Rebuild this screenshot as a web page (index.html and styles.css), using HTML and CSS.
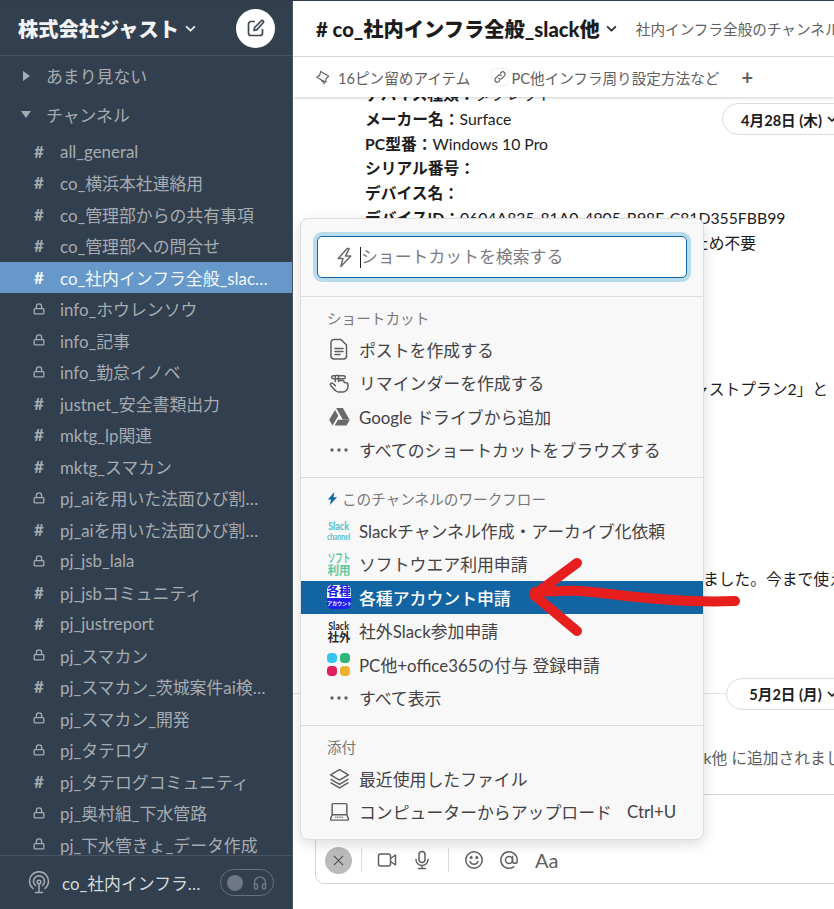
FILE: index.html
```html
<!DOCTYPE html>
<html lang="ja">
<head>
    <meta charset="utf-8" />
    <title>co_社内インフラ全般_slack他</title>
    <link rel="stylesheet" href="styles.css">
</head>
<body>
    <svg class="defs" width="0" height="0">
        <symbol id="lock" viewBox="0 0 16 16"><path d="M3.500 7.500h9a1 1 0 0 1 1 1v4a1 1 0 0 1-1 1h-9a1 1 0 0 1-1-1v-4a1 1 0 0 1 1-1zM5 7.500V5.200a3 3 0 0 1 6 0v2.300" fill="none" stroke="currentColor" stroke-width="1.500"/></symbol>
        <symbol id="chev" viewBox="0 0 10 10"><path d="M1.500 3.500 5 7l3.500-3.500" fill="none" stroke="currentColor" stroke-width="1.700" stroke-linecap="round" stroke-linejoin="round"/></symbol>
        <symbol id="dots" viewBox="0 0 20 6"><circle cx="3" cy="3" r="1.700"/><circle cx="10" cy="3" r="1.700"/><circle cx="17" cy="3" r="1.700"/></symbol>
    </svg>

    <div class="app">
        <aside class="side">
            <div class="side_head">
                <span class="team">株式会社ジャスト</span>
                <svg class="team_chev"><use href="#chev"/></svg>
                <span class="compose">
                    <svg viewBox="0 0 20 20" width="20" height="20"><path d="M9 3.500H5a2.500 2.500 0 0 0-2.500 2.500v9A2.500 2.500 0 0 0 5 17.500h9a2.500 2.500 0 0 0 2.500-2.500v-4M8 12.500l.6-3L15.300 2.800a1.300 1.300 0 0 1 1.900 0 1.300 1.300 0 0 1 0 1.900L10.600 11.900z" fill="none" stroke="#3f4a56" stroke-width="1.700" stroke-linejoin="round"/></svg>
                </span>
            </div>
            <div class="side_list">
                <div class="section section_first"><i class="tri_right"></i>あまり見ない</div>
                <div class="section section_open"><i class="tri_down"></i>チャンネル</div>
                <div class="channel"><span class="hash">#</span><span class="chan_name">all_general</span></div>
                <div class="channel"><span class="hash">#</span><span class="chan_name">co_横浜本社連絡用</span></div>
                <div class="channel"><span class="hash">#</span><span class="chan_name">co_管理部からの共有事項</span></div>
                <div class="channel"><span class="hash">#</span><span class="chan_name">co_管理部への問合せ</span></div>
                <div class="channel selected"><span class="hash">#</span><span class="chan_name">co_社内インフラ全般_slack他</span></div>
                <div class="channel"><svg class="lock"><use href="#lock"/></svg><span class="chan_name">info_ホウレンソウ</span></div>
                <div class="channel"><svg class="lock"><use href="#lock"/></svg><span class="chan_name">info_記事</span></div>
                <div class="channel"><svg class="lock"><use href="#lock"/></svg><span class="chan_name">info_勤怠イノベ</span></div>
                <div class="channel"><span class="hash">#</span><span class="chan_name">justnet_安全書類出力</span></div>
                <div class="channel"><span class="hash">#</span><span class="chan_name">mktg_lp関連</span></div>
                <div class="channel"><span class="hash">#</span><span class="chan_name">mktg_スマカン</span></div>
                <div class="channel"><svg class="lock"><use href="#lock"/></svg><span class="chan_name">pj_aiを用いた法面ひび割れ検出</span></div>
                <div class="channel"><span class="hash">#</span><span class="chan_name">pj_aiを用いた法面ひび割れ検出</span></div>
                <div class="channel"><svg class="lock"><use href="#lock"/></svg><span class="chan_name">pj_jsb_lala</span></div>
                <div class="channel"><span class="hash">#</span><span class="chan_name">pj_jsbコミュニティ</span></div>
                <div class="channel"><span class="hash">#</span><span class="chan_name">pj_justreport</span></div>
                <div class="channel"><svg class="lock"><use href="#lock"/></svg><span class="chan_name">pj_スマカン</span></div>
                <div class="channel"><span class="hash">#</span><span class="chan_name">pj_スマカン_茨城案件ai検出用</span></div>
                <div class="channel"><svg class="lock"><use href="#lock"/></svg><span class="chan_name">pj_スマカン_開発</span></div>
                <div class="channel"><svg class="lock"><use href="#lock"/></svg><span class="chan_name">pj_タテログ</span></div>
                <div class="channel"><span class="hash">#</span><span class="chan_name">pj_タテログコミュニティ</span></div>
                <div class="channel"><svg class="lock"><use href="#lock"/></svg><span class="chan_name">pj_奥村組_下水管路</span></div>
                <div class="channel"><svg class="lock"><use href="#lock"/></svg><span class="chan_name">pj_下水管きょ_データ作成</span></div>
            </div>
            <div class="side_foot">
                <svg class="huddle" viewBox="0 0 24 24" width="24" height="24" fill="none" stroke="currentColor" stroke-width="1.500" stroke-linecap="round"><path d="M6 17.500a9.500 9.500 0 1 1 12 0M8.500 14.500a5.500 5.500 0 1 1 7 0"/><circle cx="12" cy="11" r="1.800"/><path d="M12 13v8M8.500 21.500h7"/></svg>
                <span class="foot_name">co_社内インフラ全般_slack他</span>
                <span class="toggle">
                    <i class="knob"></i>
                    <svg viewBox="0 0 16 16" width="16" height="16" fill="none" stroke="#6e7783" stroke-width="1.500"><path d="M2.500 10V7.500a5.500 5.500 0 0 1 11 0V10"/><rect x="2.500" y="9" width="3" height="5" rx="1.200"/><rect x="10.500" y="9" width="3" height="5" rx="1.200"/></svg>
                </span>
            </div>
        </aside>

        <main class="main">
            <div class="head">
                <span class="title"># co_社内インフラ全般_slack他</span>
                <svg class="title_chev"><use href="#chev"/></svg>
                <span class="topic">社内インフラ全般のチャンネルです</span>
            </div>
            <div class="tabs">
                <svg class="tab_ico" viewBox="0 0 16 16" width="15" height="15" fill="none" stroke="currentColor" stroke-width="1.300" stroke-linejoin="round" stroke-linecap="round"><path d="M6.200 1.500 4.800 6 1.800 7.800 11.500 13l.2-3.500 2.800-2.800zM6.500 10.500 10 14.500"/></svg>
                <span class="tab_text">16ピン留めアイテム</span>
                <span class="tab_link">
                    <svg viewBox="0 0 16 16" width="14" height="14" fill="none" stroke="currentColor" stroke-width="1.400" stroke-linecap="round"><path d="M6.500 9.500a2.700 2.700 0 0 0 3.800 0l3-3a2.700 2.700 0 0 0-3.800-3.800L8.500 3.700M9.500 6.500a2.700 2.700 0 0 0-3.800 0l-3 3a2.700 2.700 0 0 0 3.800 3.800l1-1"/></svg>
                </span>
                <span class="tab_text">PC他インフラ周り設定方法など</span>
                <span class="tab_plus">+</span>
            </div>
            <div class="messages">
                <div class="date_sticky">4月28日 (木)<svg class="date_chev"><use href="#chev"/></svg></div>
                <div class="scroll">
                    <div class="line"><b>デバイス種類：</b>タブレット</div>
                    <div class="line"><b>メーカー名：</b>Surface</div>
                    <div class="line"><b>PC型番：</b>Windows 10 Pro</div>
                    <div class="line"><b>シリアル番号：</b></div>
                    <div class="line"><b>デバイス名：</b></div>
                    <div class="line"><b>デバイスID：</b>0604A835-81A0-4905-B98F-C81D355FBB99</div>
                    <div class="line tail_a">ため不要</div>
                    <div class="gap_a"></div>
                    <div class="line tail_b">ジャストプラン2」と</div>
                    <div class="gap_b"></div>
                    <div class="line tail_c">ました。今まで使えていた</div>
                    <div class="gap_c"></div>
                    <div class="divider"><span class="date_pill">5月2日 (月)<svg class="date_chev"><use href="#chev"/></svg></span></div>
                    <div class="gap_d"></div>
                    <div class="line tail_d">ck他 に追加されました</div>
                </div>
            </div>
            <div class="composer">
                <span class="close_btn">
                    <svg viewBox="0 0 12 12" width="11" height="11" fill="none" stroke="#4a4a4a" stroke-width="1.100"><path d="M1 1l10 10M11 1 1 11"/></svg>
                </span>
                <i class="sep"></i>
                <svg class="tool tool_video" viewBox="0 0 20 20" width="20" height="20" fill="none" stroke="currentColor" stroke-width="1.500" stroke-linejoin="round"><rect x="1.500" y="4" width="12" height="12" rx="2"/><path d="M13.500 8.500 18.500 5v10l-5-3.500"/></svg>
                <svg class="tool tool_mic" viewBox="0 0 20 20" width="20" height="20" fill="none" stroke="currentColor" stroke-width="1.500" stroke-linecap="round"><rect x="7" y="1.500" width="6" height="11" rx="3"/><path d="M4 9.500a6 6 0 0 0 12 0M10 15.500v3M6.500 18.500h7"/></svg>
                <i class="sep sep_b"></i>
                <svg class="tool tool_smile" viewBox="0 0 20 20" width="20" height="20" fill="none" stroke="currentColor" stroke-width="1.500" stroke-linecap="round"><circle cx="10" cy="10" r="8.200"/><path d="M6 11.500a4.300 4.300 0 0 0 8 0"/><circle cx="7.200" cy="7.500" r=".8" fill="currentColor"/><circle cx="12.800" cy="7.500" r=".8" fill="currentColor"/></svg>
                <svg class="tool tool_at" viewBox="0 0 20 20" width="20" height="20" fill="none" stroke="currentColor" stroke-width="1.500" stroke-linecap="round"><circle cx="10" cy="10" r="3.500"/><path d="M13.500 6.500V11a2.300 2.300 0 0 0 4.700 0v-1a8.200 8.200 0 1 0-3.500 6.800"/></svg>
                <span class="tool_aa">Aa</span>
            </div>
        </main>

        <div class="popup">
            <div class="search_wrap">
                <div class="search">
                    <svg class="search_bolt" viewBox="0 0 20 20" width="21" height="21" fill="none" stroke="#6b6b6b" stroke-width="1.400" stroke-linejoin="round"><path d="M12.500 1.500 4 11h4.500l-2 7.500L16 8.500h-5l3.500-7z"/></svg>
                    <i class="caret"></i>
                    <span class="search_text">ショートカットを検索する</span>
                </div>
            </div>

            <div class="pop_section">
                <div class="pop_label">ショートカット</div>
                <div class="pop_item">
                    <span class="pop_ico"><svg viewBox="0 0 20 22" width="20" height="22" fill="none" stroke="currentColor" stroke-width="1.500" stroke-linejoin="round" stroke-linecap="round"><path d="M5 1.500h7l5.500 5.500v11a3 3 0 0 1-3 3H5a3 3 0 0 1-3-3v-13.500a3 3 0 0 1 3-3z"/><path d="M6 10.500h8M6 13.500h8M6 16.500h5"/></svg></span>
                    ポストを作成する
                </div>
                <div class="pop_item">
                    <span class="pop_ico"><svg viewBox="0 0 20 20" width="21" height="21" fill="none" stroke="currentColor" stroke-width="1.400" stroke-linecap="round" stroke-linejoin="round"><path d="M6 9V4.500a1.500 1.500 0 0 1 3 0V9M9 3.500h5a1.500 1.500 0 0 1 0 3H4a1.500 1.500 0 0 1 0-3h2"/><path d="M9 8h4a1.500 1.500 0 0 1 1.500 1.500V10l2 .3a1.500 1.500 0 0 1 1.500 1.500V14a5 5 0 0 1-5 5H9a4 4 0 0 1-3-1.500L1.800 13a1.400 1.400 0 0 1 2-2L6 13"/></svg></span>
                    リマインダーを作成する
                </div>
                <div class="pop_item">
                    <span class="pop_ico"><svg viewBox="0 0 20 18" width="21" height="19" fill="#6a6a6a"><path d="M6.800 1h6.400l6.300 10.800h-6.400zM5.700 2.800l3.200 5.600L3.300 17.500 .2 12.200zM5.300 17.500l3.200-5.500H19.800l-3.200 5.500z"/></svg></span>
                    Google ドライブから追加
                </div>
                <div class="pop_item">
                    <span class="pop_ico"><svg class="dots"><use href="#dots"/></svg></span>
                    すべてのショートカットをブラウズする
                </div>
            </div>

            <div class="pop_section">
                <div class="pop_label">
                    <svg class="label_bolt" viewBox="0 0 12 14" width="11" height="13" fill="#1264a3"><path d="M8 0 1 8h3.500L3 14l8-8.500H7z"/></svg>
                    このチャンネルのワークフロー
                </div>
                <div class="pop_item">
                    <span class="tile tile_teal"><span class="tile_wide">Slack</span><span class="tile_thin">channel</span></span>
                    Slackチャンネル作成・アーカイブ化依頼
                </div>
                <div class="pop_item">
                    <span class="tile tile_green"><span class="tile_kana">ソフト</span><span class="tile_kanji">利用</span></span>
                    ソフトウエア利用申請
                </div>
                <div class="pop_item active">
                    <span class="tile tile_blue"><span class="tile_top">各種</span><span class="tile_bottom">アカウント</span></span>
                    各種アカウント申請
                </div>
                <div class="pop_item">
                    <span class="tile tile_black"><span class="tile_wide">Slack</span><span class="tile_kanji">社外</span></span>
                    社外Slack参加申請
                </div>
                <div class="pop_item">
                    <span class="tile_squares"><i class="sq_sky"></i><i class="sq_green"></i><i class="sq_red"></i><i class="sq_yellow"></i></span>
                    PC他+office365の付与 登録申請
                </div>
                <div class="pop_item">
                    <span class="pop_ico"><svg class="dots"><use href="#dots"/></svg></span>
                    すべて表示
                </div>
            </div>

            <div class="pop_section pop_section_last">
                <div class="pop_label">添付</div>
                <div class="pop_item">
                    <span class="pop_ico"><svg viewBox="0 0 20 20" width="21" height="21" fill="none" stroke="currentColor" stroke-width="1.400" stroke-linejoin="round"><path d="M10 1.500 18.500 6.500 10 11.500 1.500 6.500zM1.500 10.500 10 15.500l8.500-5M1.500 14 10 19l8.500-5"/></svg></span>
                    最近使用したファイル
                </div>
                <div class="pop_item">
                    <span class="pop_ico"><svg viewBox="0 0 20 20" width="21" height="21" fill="none" stroke="currentColor" stroke-width="1.400" stroke-linejoin="round"><path d="M4 2.500h12a1 1 0 0 1 1 1V13H3V3.500a1 1 0 0 1 1-1zM3 13l-1.500 4a1 1 0 0 0 1 1.200h15a1 1 0 0 0 1-1.200L17 13"/><path d="M6 15.500h8" stroke-dasharray="1 1"/></svg></span>
                    コンピューターからアップロード<span class="shortcut">Ctrl+U</span>
                </div>
            </div>
        </div>

        <svg class="arrow" viewBox="0 0 834 909" width="834" height="909" fill="none" stroke="#e61e1e" stroke-width="10" stroke-linecap="round" stroke-linejoin="round">
            <path d="M735 601C690 603 650 599 610 594S560 591 535 592"/>
            <path d="M577 563 534 595 577 631"/>
        </svg>
    </div>
</body>
</html>
```
FILE: styles.css
```css
* {
    box-sizing: border-box;
}

body {
    margin: 0;
    font-family: Lato, "Noto Sans CJK JP", sans-serif;
    font-size: 16.875px;
    color: #1d1c1d;
    background-color: white;
}

.defs {
    position: absolute;
}

.app {
    position: relative;
    display: flex;
    width: 834px;
    height: 909px;
    overflow: hidden;
    border-top: 1px solid #2f3c4b;
}

/* sidebar */
.side {
    display: flex;
    flex-direction: column;
    flex: 0 0 293px;
    min-width: 0;
    background-color: #323f4e;
    border-right: 1px solid #4a5665;
    color: #a6abb1;
}

.side_head {
    display: flex;
    align-items: center;
    flex: 0 0 55px;
    padding: 0 18px;
    border-bottom: 1px solid #495564;
}

.team {
    font-size: 20.25px;
    font-weight: 900;
    color: #f2f3f4;
}

.team_chev {
    width: 11px;
    height: 11px;
    margin-left: 6px;
    color: #e6e8ea;
}

.compose {
    display: flex;
    align-items: center;
    justify-content: center;
    width: 39px;
    height: 39px;
    margin-left: auto;
    margin-right: -1px;
    border-radius: 50%;
    background-color: white;
}

.side_list {
    flex: 1;
    min-height: 0;
    overflow: hidden;
}

.section {
    display: flex;
    align-items: center;
    height: 31.5px;
    padding-left: 46px;
    position: relative;
}

.section_first {
    margin-top: 4px;
}

.section_open {
    margin-top: 7.5px;
    margin-bottom: 5px;
}

.tri_right {
    position: absolute;
    left: 23px;
    border-left: 7px solid #a6abb1;
    border-top: 5px solid transparent;
    border-bottom: 5px solid transparent;
}

.tri_down {
    position: absolute;
    left: 21px;
    border-top: 7px solid #a6abb1;
    border-left: 5px solid transparent;
    border-right: 5px solid transparent;
}

.channel {
    display: flex;
    align-items: center;
    height: 31.5px;
    padding-left: 33px;
    padding-right: 24px;
}

.channel.selected {
    background-color: #6699c9;
    color: #f4f7fa;
}

.hash {
    flex: 0 0 27px;
    font-weight: 700;
    font-size: 17px;
    padding-left: 1px;
}

.lock {
    flex: 0 0 14px;
    width: 14px;
    height: 14px;
    margin-left: -1px;
    margin-right: 14px;
}

.chan_name {
    flex: 1;
    min-width: 0;
    overflow: hidden;
    white-space: nowrap;
    text-overflow: ellipsis;
}

.side_foot {
    display: flex;
    align-items: center;
    flex: 0 0 54px;
    padding-left: 27px;
    border-top: 1px solid #495564;
}

.huddle {
    flex: none;
    color: #a6abb1;
}

.foot_name {
    width: 141px;
    margin-left: 11px;
    overflow: hidden;
    white-space: nowrap;
    text-overflow: ellipsis;
    color: #d5dade;
}

.toggle {
    display: flex;
    align-items: center;
    gap: 9px;
    width: 54px;
    height: 27px;
    margin-left: 17px;
    padding-left: 6px;
    border: 1px solid #667180;
    border-radius: 14px;
}

.knob {
    width: 16px;
    height: 16px;
    border-radius: 50%;
    background-color: #6e7783;
}

/* main column */
.main {
    display: flex;
    flex-direction: column;
    flex: 1;
    min-width: 0;
    overflow: hidden;
}

.head {
    display: flex;
    align-items: center;
    flex: 0 0 56px;
    padding-left: 23px;
    border-bottom: 1px solid #dedede;
    white-space: nowrap;
}

.title {
    font-size: 20.25px;
    font-weight: 900;
}

.title_chev {
    flex: none;
    width: 11px;
    height: 11px;
    margin-left: 6px;
    color: #333;
}

.topic {
    margin-left: 19px;
    font-size: 14.625px;
    color: #616061;
}

.tabs {
    display: flex;
    align-items: center;
    flex: 0 0 40px;
    padding-left: 22px;
    position: relative;
    z-index: 1;
    font-size: 14.625px;
    color: #616061;
    box-shadow: 0 1px 3px rgba(0, 0, 0, 0.2);
    white-space: nowrap;
}

.tab_ico {
    margin-right: 8px;
}

.tab_link {
    display: flex;
    align-items: center;
    justify-content: center;
    width: 18px;
    height: 18px;
    margin-left: 21px;
    margin-right: 2px;
    border: 1px solid #f0f0f0;
    border-radius: 4px;
}

.tab_plus {
    margin-left: 22px;
    font-size: 20px;
    font-weight: 700;
}

.messages {
    position: relative;
    flex: 1;
    min-height: 0;
    overflow: hidden;
}

.scroll {
    margin-top: -15px;
}

.line {
    height: 24.75px;
    line-height: 24.75px;
    padding-left: 72px;
    font-size: 15.75px;
    white-space: nowrap;
}

.line b {
    font-weight: 700;
}

.tail_a {
    padding-left: 400px;
}

.tail_b {
    padding-left: 385px;
}

.tail_c {
    padding-left: 410px;
}

.tail_d {
    padding-left: 403px;
    color: #616061;
}

.gap_a {
    height: 122px;
}

.gap_b {
    height: 165px;
}

.gap_c {
    height: 86px;
}

.gap_d {
    height: 36px;
}

.divider {
    display: flex;
    align-items: center;
    height: 32px;
    padding-left: 433px;
    background: linear-gradient(#e4e4e4, #e4e4e4) 0 50% / 100% 1px no-repeat;
}

.date_pill,
.date_sticky {
    display: flex;
    align-items: center;
    justify-content: center;
    flex: none;
    width: 134px;
    height: 32px;
    border: 1px solid #dcdcdc;
    border-radius: 16px;
    background-color: white;
    font-size: 14.625px;
    font-weight: 700;
    white-space: nowrap;
}

.date_sticky {
    position: absolute;
    top: 6px;
    left: 429px;
}

.date_chev {
    width: 10px;
    height: 10px;
    margin-left: 5px;
}

.composer {
    display: flex;
    align-items: center;
    flex: 0 0 90px;
    margin: 0 -12px 25px 22px;
    padding: 42px 0 0 9px;
    border: 1px solid #d5d5d5;
    border-radius: 9px;
    color: #616061;
}

.close_btn {
    display: flex;
    align-items: center;
    justify-content: center;
    flex: none;
    width: 27px;
    height: 27px;
    border-radius: 50%;
    background-color: #bbbbbb;
}

.sep {
    flex: none;
    width: 1px;
    height: 24px;
    margin-left: 9px;
    background-color: #dddddd;
}

.sep_b {
    margin-left: 16px;
}

.tool {
    flex: none;
}

.tool_video {
    margin-left: 15px;
}

.tool_mic {
    margin-left: 15px;
}

.tool_smile {
    margin-left: 15px;
}

.tool_at {
    margin-left: 15px;
}

.tool_aa {
    margin-left: 16px;
    font-size: 20px;
}

/* shortcut menu */
.popup {
    position: absolute;
    top: 217px;
    left: 300px;
    width: 404px;
    height: 622px;
    border: 1px solid #dddddd;
    border-radius: 8px;
    background-color: #f8f8f8;
    box-shadow: 0 4px 14px rgba(0, 0, 0, 0.14);
    color: #454245;
}

.search_wrap {
    padding: 17px 16px 18px;
    border-bottom: 1px solid #dddddd;
}

.search {
    display: flex;
    align-items: center;
    height: 42px;
    padding-left: 16px;
    border: 1px solid #1264a3;
    border-radius: 5px;
    background-color: white;
    box-shadow: 0 0 0 4px #b9dcec;
}

.search_bolt {
    flex: none;
}

.caret {
    width: 1px;
    height: 21px;
    margin-left: 5px;
    background-color: #1d1c1d;
}

.search_text {
    color: #7c7a7f;
    line-height: 1;
}

.pop_section {
    padding: 9.5px 0 10.5px;
    border-bottom: 1px solid #dddddd;
}

.pop_section_last {
    border-bottom: 0;
}

.pop_label {
    display: flex;
    align-items: center;
    height: 22px;
    margin-bottom: 4px;
    padding-left: 26px;
    font-size: 14.625px;
    color: #787678;
}

.label_bolt {
    margin-right: 4px;
}

.pop_item {
    display: flex;
    align-items: center;
    height: 33.5px;
    padding-left: 26px;
    white-space: nowrap;
}

.pop_item.active {
    background-color: #1264a3;
    color: white;
    font-weight: 500;
}

.pop_ico {
    display: flex;
    align-items: center;
    justify-content: center;
    flex: none;
    width: 24px;
    height: 24px;
    margin-right: 8px;
    color: #5e5e5e;
}

.dots {
    width: 20px;
    height: 6px;
    fill: #5e5e5e;
}

.shortcut {
    margin-left: 15px;
}

.tile {
    display: flex;
    flex-direction: column;
    align-items: center;
    justify-content: center;
    flex: none;
    width: 24px;
    height: 24px;
    margin-right: 8px;
    overflow: hidden;
    border-radius: 3px;
    font-weight: 700;
    white-space: nowrap;
}

.tile_wide,
.tile_kana,
.tile_kanji {
    height: 10px;
    margin: 1px 0;
    font-size: 10px;
    line-height: 10px;
}

.tile_wide {
    transform: scale(0.9, 1.2);
}

.tile_kana {
    transform: scale(0.75, 1.2);
}

.tile_kanji {
    transform: scale(1.15, 1.2);
}

.tile_thin {
    height: 10px;
    margin-top: 1px;
    font-size: 9px;
    line-height: 10px;
    transform: scale(0.75, 1.1);
}

.tile_teal {
    color: #4dc0cf;
}

.tile_green {
    color: #58c9a2;
}

.tile_black {
    color: #2a2a2a;
}

.tile_blue {
    background-color: #2020f0;
    border-radius: 5px;
}

.tile_top {
    width: 100%;
    height: 13px;
    background-color: white;
    color: #1a1ae0;
    text-align: center;
    font-size: 12px;
    line-height: 13px;
}

.tile_bottom {
    width: 100%;
    height: 11px;
    color: white;
    font-size: 5px;
    line-height: 11px;
    text-align: center;
}

.tile_squares {
    display: grid;
    grid-template-columns: 10px 10px;
    gap: 3px;
    flex: none;
    width: 24px;
    margin-right: 8px;
}

.tile_squares i {
    height: 10px;
    border-radius: 4px;
}

.sq_sky {
    background-color: #36c5f0;
}

.sq_green {
    background-color: #2eb67d;
}

.sq_red {
    background-color: #e01e5a;
}

.sq_yellow {
    background-color: #ecb22e;
}

.arrow {
    position: absolute;
    top: -1px;
    left: 0;
    pointer-events: none;
}
```
